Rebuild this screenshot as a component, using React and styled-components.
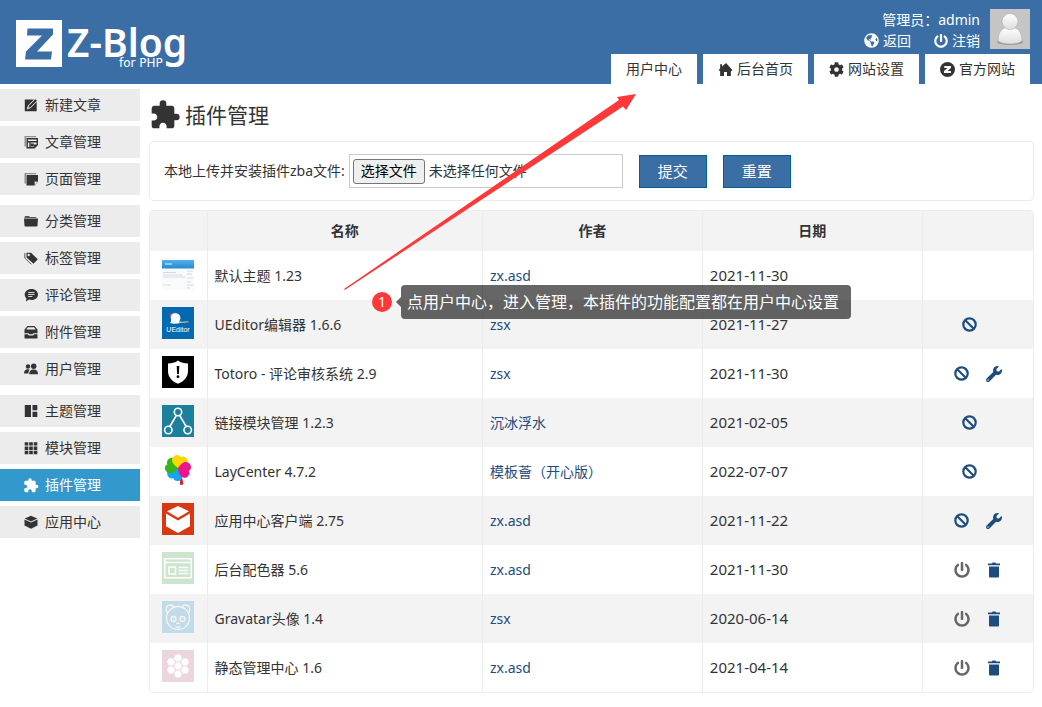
import { useRef, useState } from "react";
import styled, { createGlobalStyle } from "styled-components";
import { FaCog, FaGlobeAmericas, FaPowerOff, FaWrench } from "react-icons/fa";
import { MdExtension } from "react-icons/md";

const GlobalStyle = createGlobalStyle`
  * {
    box-sizing: border-box;
  }
  body {
    margin: 0;
    background: #fff;
    color: #333;
    font-family: "Noto Sans", "Noto Sans CJK SC", sans-serif;
    font-size: 14px;
    line-height: 20px;
  }
  a {
    text-decoration: none;
  }
`;

const Page = styled.div`
  position: relative;
`;

const Header = styled.header`
  display: flex;
  justify-content: space-between;
  height: 84px;
  padding: 0 12px 0 16px;
  background: #3a6ea5;
`;

const LogoLink = styled.a`
  display: block;
  padding-top: 12px;
`;

const HeaderRight = styled.div`
  display: flex;
  flex-direction: column;
  align-items: flex-end;
  justify-content: space-between;
  padding-top: 9px;
`;

const UserBox = styled.div`
  display: flex;
  gap: 10px;
  color: #fff;
`;

const UserInfo = styled.div`
  display: flex;
  flex-direction: column;
  align-items: flex-end;
  line-height: 21px;
`;

const UserLinks = styled.div`
  display: flex;
  gap: 23px;
`;

const UserLink = styled.a`
  display: flex;
  align-items: center;
  gap: 4px;
  color: #fff;
`;

const TopMenu = styled.nav`
  display: flex;
  gap: 6px;
`;

const TopLink = styled.a`
  display: flex;
  align-items: center;
  gap: 4px;
  height: 30px;
  padding: 0 15px;
  background: #fff;
  color: #333;
`;

const Body = styled.div`
  display: flex;
`;

const Sidebar = styled.nav`
  display: flex;
  flex-direction: column;
  flex: 0 0 140px;
  gap: 10px;
  padding-top: 5px;
`;

const MenuGroup = styled.div`
  display: flex;
  flex-direction: column;
  gap: 5px;
`;

const MenuLink = styled.a`
  display: flex;
  align-items: center;
  gap: 6px;
  height: 32px;
  padding-left: 23px;
  background: ${({ $active }) => ($active ? "#3399cc" : "#ececec")};
  color: ${({ $active }) => ($active ? "#fff" : "#333")};
`;

const MenuIcon = styled.span`
  display: flex;
  align-items: center;
  justify-content: center;
  width: 16px;
  height: 16px;
`;

const Main = styled.main`
  flex: 1;
  min-width: 0;
  padding: 0 8px 13px 9px;
`;

const Title = styled.h1`
  display: flex;
  align-items: center;
  gap: 4px;
  height: 57px;
  margin: 0;
  padding-top: 5px;
  font-size: 21px;
  font-weight: 400;
`;

const UploadForm = styled.form`
  display: flex;
  align-items: center;
  gap: 16px;
  height: 60px;
  margin-bottom: 9px;
  padding: 0 14px;
  border: 1px solid #ececec;
  border-radius: 4px;
`;

const Field = styled.div`
  display: flex;
  align-items: center;
  gap: 4px;
`;

const FileBox = styled.div`
  display: flex;
  align-items: center;
  gap: 4px;
  width: 274px;
  height: 34px;
  padding: 0 3px;
  border: 1px solid #ccc;
`;

const PickButton = styled.button`
  height: 25px;
  padding: 0 7px;
  border: 1px solid #767676;
  border-radius: 3px;
  background: #efefef;
  color: #000;
  font: inherit;
`;

const FormButton = styled.button`
  height: 33px;
  padding: 0 18px;
  border: 1px solid #00618f;
  background: #3a6ea5;
  color: #fff;
  font: inherit;
  font-size: 15px;
`;

const TableFrame = styled.div`
  overflow: hidden;
  border: 1px solid #ececec;
  border-radius: 4px;
`;

const Table = styled.table`
  width: 100%;
  border-collapse: separate;
  border-spacing: 0;
  table-layout: fixed;
`;

const HeadRow = styled.tr`
  height: 40px;
  background: #f3f3f3;
`;

const BodyRow = styled.tr`
  height: 49px;
  background: #fff;
  &:nth-child(even) {
    background: #f3f3f3;
  }
`;

const HeadCell = styled.th`
  width: ${({ $width }) => $width};
  padding: 0 7px;
  font-weight: 700;
  & + & {
    border-left: 1px solid #ececec;
  }
`;

const Cell = styled.td`
  padding: 0 7px;
  & + & {
    border-left: 1px solid #ececec;
  }
`;

const DateText = styled.time`
  font-size: 15px;
`;

const AuthorLink = styled.a`
  color: #1d4c7d;
`;

const PluginIcon = styled.span`
  display: flex;
  justify-content: center;
  padding-bottom: 4px;
  opacity: ${({ $off }) => ($off ? 0.2 : 1)};
`;

const Actions = styled.div`
  display: flex;
  align-items: center;
  justify-content: center;
  gap: 16px;
`;

const ActionLink = styled.a`
  display: flex;
  align-items: center;
  justify-content: center;
  width: 16px;
  height: 20px;
  color: ${({ $off }) => ($off ? "#666" : "#1d4c7d")};
`;

const Arrow = styled.svg`
  position: absolute;
  top: 94px;
  left: 344px;
  pointer-events: none;
`;

const Note = styled.div`
  position: absolute;
  top: 285px;
  left: 372px;
  display: flex;
  align-items: center;
  gap: 9px;
  color: #fff;
`;

const NoteNumber = styled.span`
  width: 20px;
  height: 20px;
  border-radius: 50%;
  background: #fd3838;
  font-size: 14px;
  line-height: 20px;
  text-align: center;
`;

const NoteText = styled.span`
  position: relative;
  padding: 0 12px 0 6px;
  border-radius: 4px;
  background: rgba(0, 0, 0, 0.6);
  font-size: 16px;
  line-height: 34px;
  white-space: nowrap;
  &::before {
    content: "";
    position: absolute;
    top: 12px;
    right: 100%;
    border: 5px solid transparent;
    border-left: 0;
    border-right-color: rgba(0, 0, 0, 0.6);
  }
`;

const Svg = ({ size = 14, box = 14, children }) => (
  <svg width={size} height={size} viewBox={`0 0 ${box} ${box}`} fill="currentColor" aria-hidden="true">
    {children}
  </svg>
);

const Logo = () => (
  <svg width="180" height="64" viewBox="0 -8 180 64" fill="#fff" role="img" aria-label="Z-Blog for PHP">
    <path d="M0 0h46v47H0z" />
    <path d="M11.500 8.500H37v6L21 31.500h15l-1 8H9l1-8L26 15.500H11z" fill="#3a6ea5" />
    <text x="51" y="37" fontSize="39" fontWeight="600" fontFamily="Noto Sans, sans-serif">
      Z-Blog
    </text>
    <text x="103" y="47" fontSize="12" fontFamily="DejaVu Sans, sans-serif">
      for PHP
    </text>
  </svg>
);

const Avatar = () => (
  <svg width="40" height="40" viewBox="0 0 40 40" aria-hidden="true">
    <defs>
      <linearGradient id="person" x1="0" y1="0" x2="0" y2="1">
        <stop offset="0" stopColor="#fff" />
        <stop offset="1" stopColor="#dedede" />
      </linearGradient>
    </defs>
    <path d="M0 0h40v40H0z" fill="#c5c5c5" />
    <ellipse cx="20" cy="33" rx="13" ry="3" fill="#999" />
    <path d="M8 32c0-9 4-14 12-14s12 5 12 14c-5 4-19 4-24 0z" fill="url(#person)" stroke="#aaa" strokeWidth=".6" />
    <circle cx="20" cy="12.500" r="8" fill="url(#person)" stroke="#aaa" strokeWidth=".6" />
  </svg>
);

const HomeIcon = () => (
  <Svg size={15}>
    <path d="M7.500 1 3.800 4.300V2H2v4L.7 7.400l.8.900H2V13h3.600V9.300h2.800V13H12V8.300h.6l.8-.9z" />
  </Svg>
);

const ZIcon = () => (
  <Svg size={15}>
    <circle cx="7" cy="7" r="7" />
    <path d="M4 3.800h6.200v1.900L7 8.500h3.200v1.800H3.700V8.500L7 5.600H4z" fill="#fff" />
  </Svg>
);

const EditIcon = () => (
  <Svg>
    <path d="M.8 1.500H10L4 7.500 2.700 11.400l3.900-1.300 6.100-6.300V13.200H.8z" />
    <path d="m11.300.8 2 2-6.800 6.800-2.600.7.700-2.600z" stroke="#ececec" strokeWidth=".7" />
  </Svg>
);

const PostIcon = () => (
  <Svg>
    <path d="M.5 11.500V1H12v1.300H2v9.200z" opacity=".5" />
    <path
      d="M2.500 3H14v7l-3.500 3.500h-8zm1.400 1.600v1.400h8.700V4.600zm0 3v4.500h1.400V7.600zm2.800 0v4.500h3.200V9.500h2.700V7.600z"
      fillRule="evenodd"
    />
    <path d="M6.800 8.500h3v3h-3z" />
  </Svg>
);

const PageIcon = () => (
  <Svg>
    <path d="M.5 11.500V1H12v1.300H2v9.200z" opacity=".5" />
    <path d="M2.500 3H14v6.500h-3.500v4h-8z" />
    <path d="M10.500 9.500h3.200l-3.200 3.700z" fill="#fff" stroke="currentColor" strokeWidth=".5" />
  </Svg>
);

const FolderIcon = () => (
  <Svg>
    <path d="M.5 3.500c0-1 .5-1.500 1.500-1.500h3l1 1h5c1 0 1.500.5 1.500 1H.5z" opacity=".8" />
    <path d="M0 4.500h14l-.5 7c0 .7-.4 1-1 1h-11c-.6 0-1-.3-1-1z" />
  </Svg>
);

const TagIcon = () => (
  <Svg>
    <path
      d="M2.500 1.800H7l6.800 6.500-4.300 4.500L2.500 6.500zm2.200 1a1.200 1.200 0 1 0 0 2.400 1.200 1.200 0 0 0 0-2.400z"
      fillRule="evenodd"
    />
    <path d="M.8 2v5l6.500 6.300" fill="none" stroke="currentColor" strokeWidth=".8" />
  </Svg>
);

const CommentIcon = () => (
  <Svg>
    <path d="M7.500 1C11.500 1 14 3.500 14 6.500S11.500 12 7.500 12c-1 0-1.700-.2-2.500-.4L2 13.500l.4-3.200C1.200 9.300.7 8 .7 6.500.7 3.500 3.500 1 7.500 1z" />
    <path d="M4.200 4.500h6.300M4.200 6.500h6.300M4.200 8.500h4.200" stroke="#ececec" strokeWidth=".9" />
  </Svg>
);

const DrawerIcon = () => (
  <Svg>
    <path
      d="M3.500 1h7L13.500 4.500v3.800H9.500l-1 1h-3l-1-1H.5V4.500zm.5 1.200L2.200 4.500h9.600L10 2.200z"
      fillRule="evenodd"
    />
    <path d="M.5 9.300h3.200l1.300 1.200h4l1.300-1.200h3.200v4.200H.5z" />
  </Svg>
);

const UsersIcon = () => (
  <Svg>
    <circle cx="4" cy="4.500" r="2.200" />
    <circle cx="9.700" cy="4.200" r="2.700" />
    <path d="M0 11.500c0-2.700 1.300-4.300 3.700-4.300 1 0 1.600.2 2 .6C4.800 8.900 4.400 10 4.400 11.500zM5.200 12.300c0-3.300 1.400-4.800 4.500-4.800s4.300 1.500 4.300 4.800z" />
  </Svg>
);

const ThemeIcon = () => (
  <Svg>
    <path d="M.8 1H7v12H.8zM8.500 1h4.800v5.200H8.500zM8.500 7.800h4.800V13H8.500z" />
  </Svg>
);

const GridIcon = () => (
  <Svg>
    <path d="M.7 1.200h3.600v3.400H.7zM5.200 1.200h3.600v3.400H5.200zM9.700 1.200h3.600v3.400H9.700zM.7 5.500h3.600v3.400H.7zM5.200 5.500h3.600v3.400H5.200zM9.700 5.500h3.600v3.400H9.700zM.7 9.800h3.600v3.400H.7zM5.200 9.800h3.600v3.400H5.200zM9.700 9.800h3.600v3.400H9.700z" />
  </Svg>
);

const BoxIcon = () => (
  <Svg>
    <path d="M7 .8 13.300 3.600 7 6.600.7 3.600zM.5 4.500 7 7.500l6.500-3V10.500L7 13.700.5 10.500z" />
  </Svg>
);

const BanIcon = () => (
  <Svg size={15} box={15}>
    <circle cx="7.500" cy="7.500" r="6.200" fill="none" stroke="currentColor" strokeWidth="2.200" />
    <path d="m3.500 3.500 8 8" stroke="currentColor" strokeWidth="2.200" />
  </Svg>
);

const TrashIcon = () => (
  <Svg size={16} box={16}>
    <path d="M2 1.500h4L6.500.5h3l.5 1h4v1.800H2zM3 4.500h10v9.800c0 .8-.4 1.200-1.200 1.200H4.200c-.8 0-1.200-.4-1.200-1.200z" />
  </Svg>
);

const DefaultThemeArt = () => (
  <Svg size={32} box={32}>
    <defs>
      <linearGradient id="sky" x1="0" y1="0" x2="0" y2="1">
        <stop offset="0" stopColor="#55b0e8" />
        <stop offset="1" stopColor="#2588d2" />
      </linearGradient>
    </defs>
    <path d="M0 0h32v32H0z" fill="#f9fafb" />
    <path d="M0 2h32v8.500H0z" fill="url(#sky)" />
    <path d="M3 6h7" stroke="#a8dbf7" strokeWidth="1.500" />
    <path d="M1 14.500h13M1 17h20M1 19h22M1 27h8" stroke="#d2dce4" />
    <path d="M25 13h6M25 16h5M25 20h6M25 24h4M25 27h6M25 30h3" stroke="#e1e5e8" strokeWidth="1.500" />
  </Svg>
);

const UEditorArt = () => (
  <Svg size={32} box={32}>
    <path d="M0 0h32v32H0z" fill="#0369b0" />
    <path
      d="M8.500 8c2-2 7-2.500 9 0 1.500 2 1 5-.5 6.500 3 .8 6 .2 9 0-2 1-5 1.300-8 1.500-3 1-7 1-10 0 .5-1 1.500-1.500 1-3z"
      fill="#fff"
    />
    <path d="M6.500 6.500h3v3z" fill="#e33" />
    <path d="M17 15.200c4 .4 6-.6 10-.2" stroke="#a9a196" fill="none" />
    <text x="16" y="24.500" textAnchor="middle" fontSize="7" fontFamily="Liberation Sans, sans-serif" fill="#fff">
      UEditor
    </text>
  </Svg>
);

const ShieldArt = () => (
  <Svg size={32} box={32}>
    <path d="M0 0h32v32H0z" fill="#000" />
    <path d="M16 4.500c3 2.200 6.300 3 10 3V15c0 6-4 10.500-10 12.800C10 25.500 6 21 6 15V7.500c3.700 0 7-.8 10-3z" fill="#fff" />
    <path d="M14.700 10h2.600l-.4 8h-1.800z" fill="#000" />
    <circle cx="16" cy="20.700" r="1.400" fill="#000" />
  </Svg>
);

const LinkArt = () => (
  <Svg size={32} box={32}>
    <path d="M0 0h32v32H0z" fill="#1c7f9c" />
    <path d="m14.300 10.500-6.500 11M17.700 10.500l6.500 11" stroke="#fff" strokeWidth="1.600" />
    <g fill="none" stroke="#fff" strokeWidth="1.600">
      <circle cx="16" cy="7" r="3.700" />
      <circle cx="6.300" cy="25" r="3.700" />
      <circle cx="25.700" cy="25" r="3.700" />
    </g>
  </Svg>
);

const petal = "M0 0C-9-3-9-8-6.500-11c2-2 5.500-2 6.500 0 1-2 4.500-2 6.500 0C9-8 9-3 0 0z";

const CloverArt = () => (
  <Svg size={32} box={32}>
    <path d="M17 17c2 4 3 8 4 13l-2.500.5C19 26 18 22 17 17z" fill="#d2202c" stroke="#d2202c" />
    <g transform="translate(16 14)">
      <path d={petal} fill="#19a5ed" transform="rotate(205)" />
      <path d={petal} fill="#35b518" transform="rotate(290)" />
      <path d={petal} fill="#ffd500" transform="rotate(15)" />
      <path d={petal} fill="#ec168c" transform="rotate(105)" />
    </g>
  </Svg>
);

const AppCenterArt = () => (
  <Svg size={32} box={32}>
    <path d="M0 0h32v32H0z" fill="#d73a12" />
    <path d="m16 3 11 5.300-11 6.500L5 8.300zM4 10.500l12 7 12-7v12.700L16 30 4 23.200z" fill="#fff" />
  </Svg>
);

const PaletteArt = () => (
  <Svg size={32} box={32}>
    <path d="M0 0h32v32H0z" fill="#0c7d10" />
    <g fill="none" stroke="#fff" strokeWidth="1.500">
      <path d="M2.700 6.700h26.600v19H2.700zM2.700 10.500h26.600" />
      <path d="M7 15h6.500v7H7zM16.500 15.500h9.800M16.500 18.500h9.800M16.500 21.500h9.800" />
    </g>
  </Svg>
);

const BearArt = () => (
  <Svg size={32} box={32}>
    <path d="M0 0h32v32H0z" fill="#0080c0" />
    <g fill="none" stroke="#fff" strokeWidth="1.300">
      <circle cx="16" cy="17" r="11.500" />
      <path d="M5 12C3 7 5 4 8 4c2 0 3.500 1 4 2.500M27 12c2-5 0-8-3-8-2 0-3.500 1-4 2.500" />
      <circle cx="11.500" cy="18" r="2.500" />
      <circle cx="20.500" cy="18" r="2.500" />
      <path d="M14.500 23c1-1 2-1 3 0M13.500 25.500c1.500 1 3.500 1 5 0" />
    </g>
    <path d="M11 17.500h1v1h-1zM20 17.500h1v1h-1z" fill="#fff" />
  </Svg>
);

const HoneycombArt = () => (
  <Svg size={32} box={32}>
    <path d="M0 0h32v32H0z" fill="#a03460" />
    <g fill="#fff">
      {[[16, 8], [16, 16], [16, 24], [9, 12], [9, 20], [23, 12], [23, 20]].map(([x, y]) => (
        <path key={`${x}-${y}`} d="M-2-3.600h4L4 0 2 3.600h-4L-4 0z" transform={`translate(${x} ${y})`} />
      ))}
    </g>
  </Svg>
);

const topLinks = [
  { label: "用户中心" },
  { label: "后台首页", icon: <HomeIcon /> },
  { label: "网站设置", icon: <FaCog size={15} /> },
  { label: "官方网站", icon: <ZIcon /> },
];

const menuGroups = [
  [
    { label: "新建文章", icon: <EditIcon /> },
    { label: "文章管理", icon: <PostIcon /> },
    { label: "页面管理", icon: <PageIcon /> },
  ],
  [
    { label: "分类管理", icon: <FolderIcon /> },
    { label: "标签管理", icon: <TagIcon /> },
    { label: "评论管理", icon: <CommentIcon /> },
    { label: "附件管理", icon: <DrawerIcon /> },
    { label: "用户管理", icon: <UsersIcon /> },
  ],
  [
    { label: "主题管理", icon: <ThemeIcon /> },
    { label: "模块管理", icon: <GridIcon /> },
    { label: "插件管理", icon: <MdExtension size={17} />, active: true },
    { label: "应用中心", icon: <BoxIcon /> },
  ],
];

const columns = [
  { label: "", width: "6.4%" },
  { label: "名称", width: "31.2%" },
  { label: "作者", width: "24.9%" },
  { label: "日期", width: "24.9%" },
  { label: "", width: "12.6%" },
];

const plugins = [
  { name: "默认主题 1.23", author: "zx.asd", date: "2021-11-30", art: <DefaultThemeArt />, state: "theme" },
  { name: "UEditor编辑器 1.6.6", author: "zsx", date: "2021-11-27", art: <UEditorArt />, state: "on" },
  { name: "Totoro - 评论审核系统 2.9", author: "zsx", date: "2021-11-30", art: <ShieldArt />, state: "on", setup: true },
  { name: "链接模块管理 1.2.3", author: "沉冰浮水", date: "2021-02-05", art: <LinkArt />, state: "on" },
  { name: "LayCenter 4.7.2", author: "模板薈（开心版）", date: "2022-07-07", art: <CloverArt />, state: "on" },
  { name: "应用中心客户端 2.75", author: "zx.asd", date: "2021-11-22", art: <AppCenterArt />, state: "on", setup: true },
  { name: "后台配色器 5.6", author: "zx.asd", date: "2021-11-30", art: <PaletteArt />, state: "off" },
  { name: "Gravatar头像 1.4", author: "zsx", date: "2020-06-14", art: <BearArt />, state: "off" },
  { name: "静态管理中心 1.6", author: "zx.asd", date: "2021-04-14", art: <HoneycombArt />, state: "off" },
];

function PluginActions({ state, setup }) {
  if (state === "theme") return null;
  if (state === "off") {
    return (
      <Actions>
        <ActionLink href="#" $off aria-label="启用">
          <FaPowerOff size={16} />
        </ActionLink>
        <ActionLink href="#" aria-label="删除">
          <TrashIcon />
        </ActionLink>
      </Actions>
    );
  }
  return (
    <Actions>
      <ActionLink href="#" aria-label="停用">
        <BanIcon />
      </ActionLink>
      {setup ? (
        <ActionLink href="#" aria-label="管理">
          <FaWrench size={16} />
        </ActionLink>
      ) : (
        <span />
      )}
    </Actions>
  );
}

function Upload() {
  const input = useRef(null);
  const [file, setFile] = useState("");

  return (
    <UploadForm onSubmit={(e) => e.preventDefault()} onReset={() => setFile("")}>
      <Field>
        <label htmlFor="zba">本地上传并安装插件zba文件:</label>
        <FileBox>
          <input
            ref={input}
            id="zba"
            type="file"
            accept=".zba"
            hidden
            onChange={(e) => setFile(e.target.files[0]?.name ?? "")}
          />
          <PickButton type="button" onClick={() => input.current.click()}>
            选择文件
          </PickButton>
          <span>{file || "未选择任何文件"}</span>
        </FileBox>
      </Field>
      <FormButton type="submit">提交</FormButton>
      <FormButton type="reset">重置</FormButton>
    </UploadForm>
  );
}

export default function App() {
  return (
    <Page>
      <GlobalStyle />
      <Header>
        <LogoLink href="#">
          <Logo />
        </LogoLink>
        <HeaderRight>
          <UserBox>
            <UserInfo>
              <span>管理员：admin</span>
              <UserLinks>
                <UserLink href="#">
                  <FaGlobeAmericas size={15} />
                  返回
                </UserLink>
                <UserLink href="#">
                  <FaPowerOff size={14} />
                  注销
                </UserLink>
              </UserLinks>
            </UserInfo>
            <Avatar />
          </UserBox>
          <TopMenu>
            {topLinks.map(({ label, icon }) => (
              <TopLink key={label} href="#">
                {icon}
                {label}
              </TopLink>
            ))}
          </TopMenu>
        </HeaderRight>
      </Header>

      <Body>
        <Sidebar>
          {menuGroups.map((group, idx) => (
            <MenuGroup key={idx}>
              {group.map(({ label, icon, active }) => (
                <MenuLink key={label} href="#" $active={active}>
                  <MenuIcon>{icon}</MenuIcon>
                  {label}
                </MenuLink>
              ))}
            </MenuGroup>
          ))}
        </Sidebar>

        <Main>
          <Title>
            <MdExtension size={32} />
            插件管理
          </Title>
          <Upload />
          <TableFrame>
            <Table>
              <thead>
                <HeadRow>
                  {columns.map(({ label, width }, idx) => (
                    <HeadCell key={idx} $width={width}>
                      {label}
                    </HeadCell>
                  ))}
                </HeadRow>
              </thead>
              <tbody>
                {plugins.map(({ name, author, date, art, state, setup }) => (
                  <BodyRow key={name}>
                    <Cell>
                      <PluginIcon $off={state === "off"}>{art}</PluginIcon>
                    </Cell>
                    <Cell>{name}</Cell>
                    <Cell>
                      <AuthorLink href="#">{author}</AuthorLink>
                    </Cell>
                    <Cell>
                      <DateText>{date}</DateText>
                    </Cell>
                    <Cell>
                      <PluginActions state={state} setup={setup} />
                    </Cell>
                  </BodyRow>
                ))}
              </tbody>
            </Table>
          </TableFrame>
        </Main>
      </Body>

      <Arrow width="292" height="196" viewBox="0 0 292 196" fill="#fd3838" aria-hidden="true">
        <path d="M0 195 275 6l-2-3L292 0l-10 16-3-3.500L.8 196z" />
      </Arrow>
      <Note>
        <NoteNumber>1</NoteNumber>
        <NoteText>点用户中心，进入管理，本插件的功能配置都在用户中心设置</NoteText>
      </Note>
    </Page>
  );
}
